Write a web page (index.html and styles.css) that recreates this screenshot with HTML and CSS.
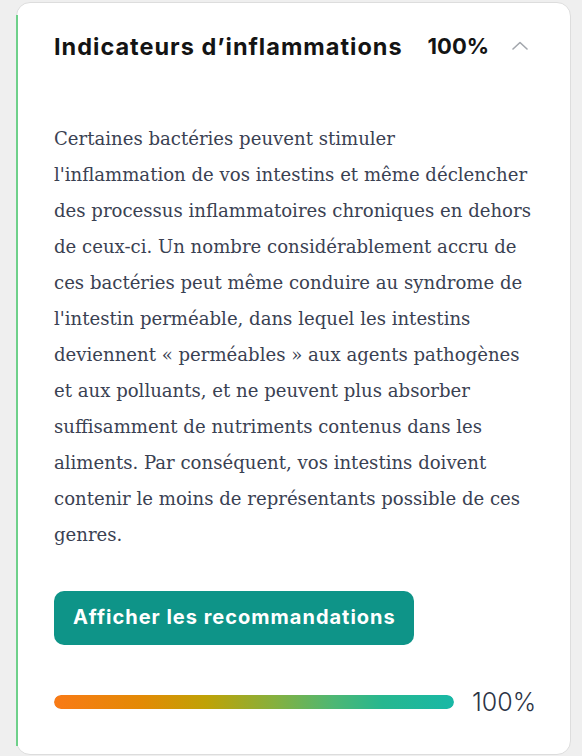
FILE: index.html
```html
<!DOCTYPE html>
<html lang="fr">
<head>
<meta charset="utf-8">
<title>Indicateurs d'inflammations</title>
<link rel="stylesheet" href="styles.css">
</head>
<body>
<section class="card">
  <header class="card-header">
    <h2 class="card-title">Indicateurs d’inflammations</h2>
    <span class="card-score">100%</span>
    <svg class="chevron" width="16" height="9" viewBox="0 0 16 9" aria-hidden="true"><path d="M1 8 L8 1.5 L15 8" fill="none" stroke="#a3a7ad" stroke-width="1.6" stroke-linecap="round" stroke-linejoin="round"/></svg>
  </header>
  <p class="card-text">Certaines bactéries peuvent stimuler<br>l'inflammation de vos intestins et même déclencher<br>des processus inflammatoires chroniques en dehors<br>de ceux-ci. Un nombre considérablement accru de<br>ces bactéries peut même conduire au syndrome de<br>l'intestin perméable, dans lequel les intestins<br>deviennent « perméables » aux agents pathogènes<br>et aux polluants, et ne peuvent plus absorber<br>suffisamment de nutriments contenus dans les<br>aliments. Par conséquent, vos intestins doivent<br>contenir le moins de représentants possible de ces<br>genres.</p>
  <button class="btn" type="button">Afficher les recommandations</button>
  <div class="progress">
    <div class="progress-track"><div class="progress-fill" style="width:100%"></div></div>
    <span class="progress-value">100%</span>
  </div>
</section>
</body>
</html>
```
FILE: styles.css
```css
* { box-sizing: border-box; }
html, body { margin: 0; padding: 0; }
body {
  background: #efefef;
  width: 582px;
  height: 756px;
  overflow: hidden;
  padding: 2px 11px 0 16px;
}
.card {
  position: relative;
  background: #fff;
  border: 1px solid #dddddd;
  border-radius: 14px;
  padding: 28px 30px 0 37px;
  height: 753px;
}
.card::before {
  content: "";
  position: absolute;
  left: -1px;
  top: 12px;
  bottom: 8px;
  width: 2px;
  background: #6ed08a;
}
.card-header {
  display: flex;
  align-items: center;
  height: 30px;
  white-space: nowrap;
}
.card-title {
  margin: 0;
  flex-shrink: 0;
  font-family: Inter, "Noto Sans", sans-serif;
  font-weight: 700;
  font-size: 23.5px;
  letter-spacing: 1px;
  color: #141414;
}
.card-score {
  margin-left: 25px;
  flex-shrink: 0;
  font-family: Inter, "Noto Sans", sans-serif;
  font-weight: 700;
  font-size: 22px;
  color: #141414;
}
.chevron {
  margin-left: 23px;
  margin-top: -2px;
  flex-shrink: 0;
}
.card-text {
  margin: 60px 0 0 0;
  font-family: "DejaVu Serif", serif;
  font-size: 18.1px;
  line-height: 36px;
  color: #3a4152;
  white-space: nowrap;
}
.btn {
  display: block;
  margin-top: 38px;
  height: 54px;
  width: 360px;
  border: none;
  border-radius: 10px;
  background: #0e9488;
  color: #fff;
  font-family: Inter, "Noto Sans", sans-serif;
  font-weight: 700;
  font-size: 20px;
  letter-spacing: 1px;
  text-align: left;
  padding: 0 0 2px 19px;
}
.progress {
  display: flex;
  align-items: center;
  margin-top: 42px;
  gap: 18px;
}
.progress-track {
  flex-shrink: 0;
  width: 400px;
  height: 14px;
  border-radius: 7px;
  background: #e5e7eb;
  overflow: hidden;
}
.progress-fill {
  height: 100%;
  border-radius: 7px;
  background: linear-gradient(90deg, #f97a16 0%, #e38a05 22%, #bfa206 38%, #86b03e 55%, #4db774 70%, #27b78f 82%, #18b8a6 100%);
}
.progress-value {
  font-family: Inter, "Noto Sans", sans-serif;
  font-weight: 300;
  font-size: 25px;
  color: #2c3446;
}
```
